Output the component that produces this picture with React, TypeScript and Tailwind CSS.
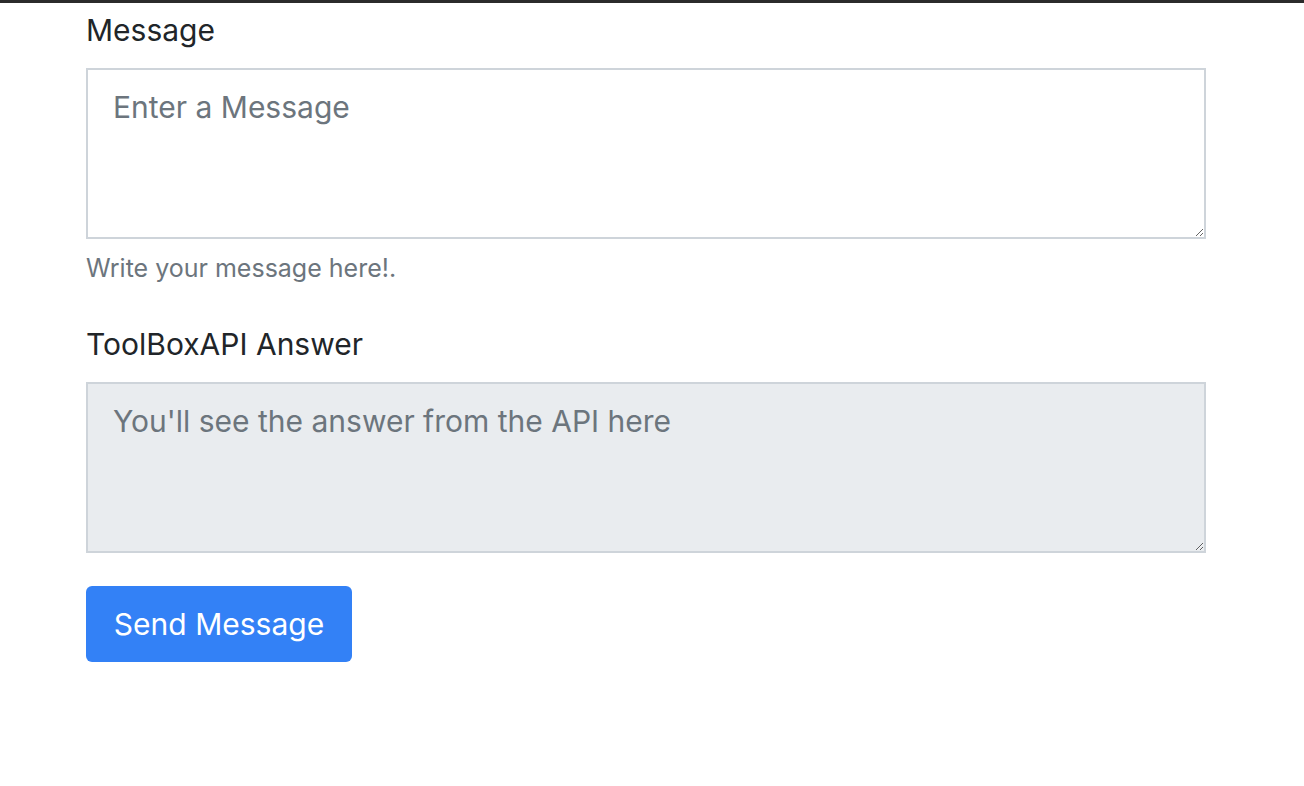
export default function App() {
  return (
    <div className="min-h-[786px] w-full bg-white" style={{ fontFamily: "Inter, 'Noto Sans', sans-serif" }}>
      <div className="h-[3px] w-full bg-[#2b2b2b]" />
      <div className="pl-[86px] pr-[98px]">
        <label className="block mt-[7px] text-[30px] leading-[40px] text-[#212529]">Message</label>
        <textarea
          placeholder="Enter a Message"
          className="mt-[18px] block w-[1120px] h-[171px] border-2 border-[#ced4da] bg-white px-[25px] pt-[15px] pb-[17px] text-[30px] leading-[44px] text-[#212529] placeholder:text-[#6c757d] outline-none"
        />
        <p className="mt-[12px] text-[25px] leading-[34px] text-[#6c757d]">Write your message here!.</p>
        <label className="block mt-[39px] text-[30px] leading-[40px] text-[#212529]">ToolBoxAPI Answer</label>
        <textarea
          placeholder="You'll see the answer from the API here"
          readOnly
          className="mt-[18px] block w-[1120px] h-[171px] border-2 border-[#ced4da] bg-[#e9ecef] px-[25px] pt-[15px] pb-[17px] text-[30px] leading-[44px] text-[#212529] placeholder:text-[#6c757d] outline-none"
        />
        <button className="mt-[33px] h-[76px] w-[266px] rounded-[6px] bg-[#3381f6] text-[30px] text-white">
          Send Message
        </button>
      </div>
    </div>
  );
}
